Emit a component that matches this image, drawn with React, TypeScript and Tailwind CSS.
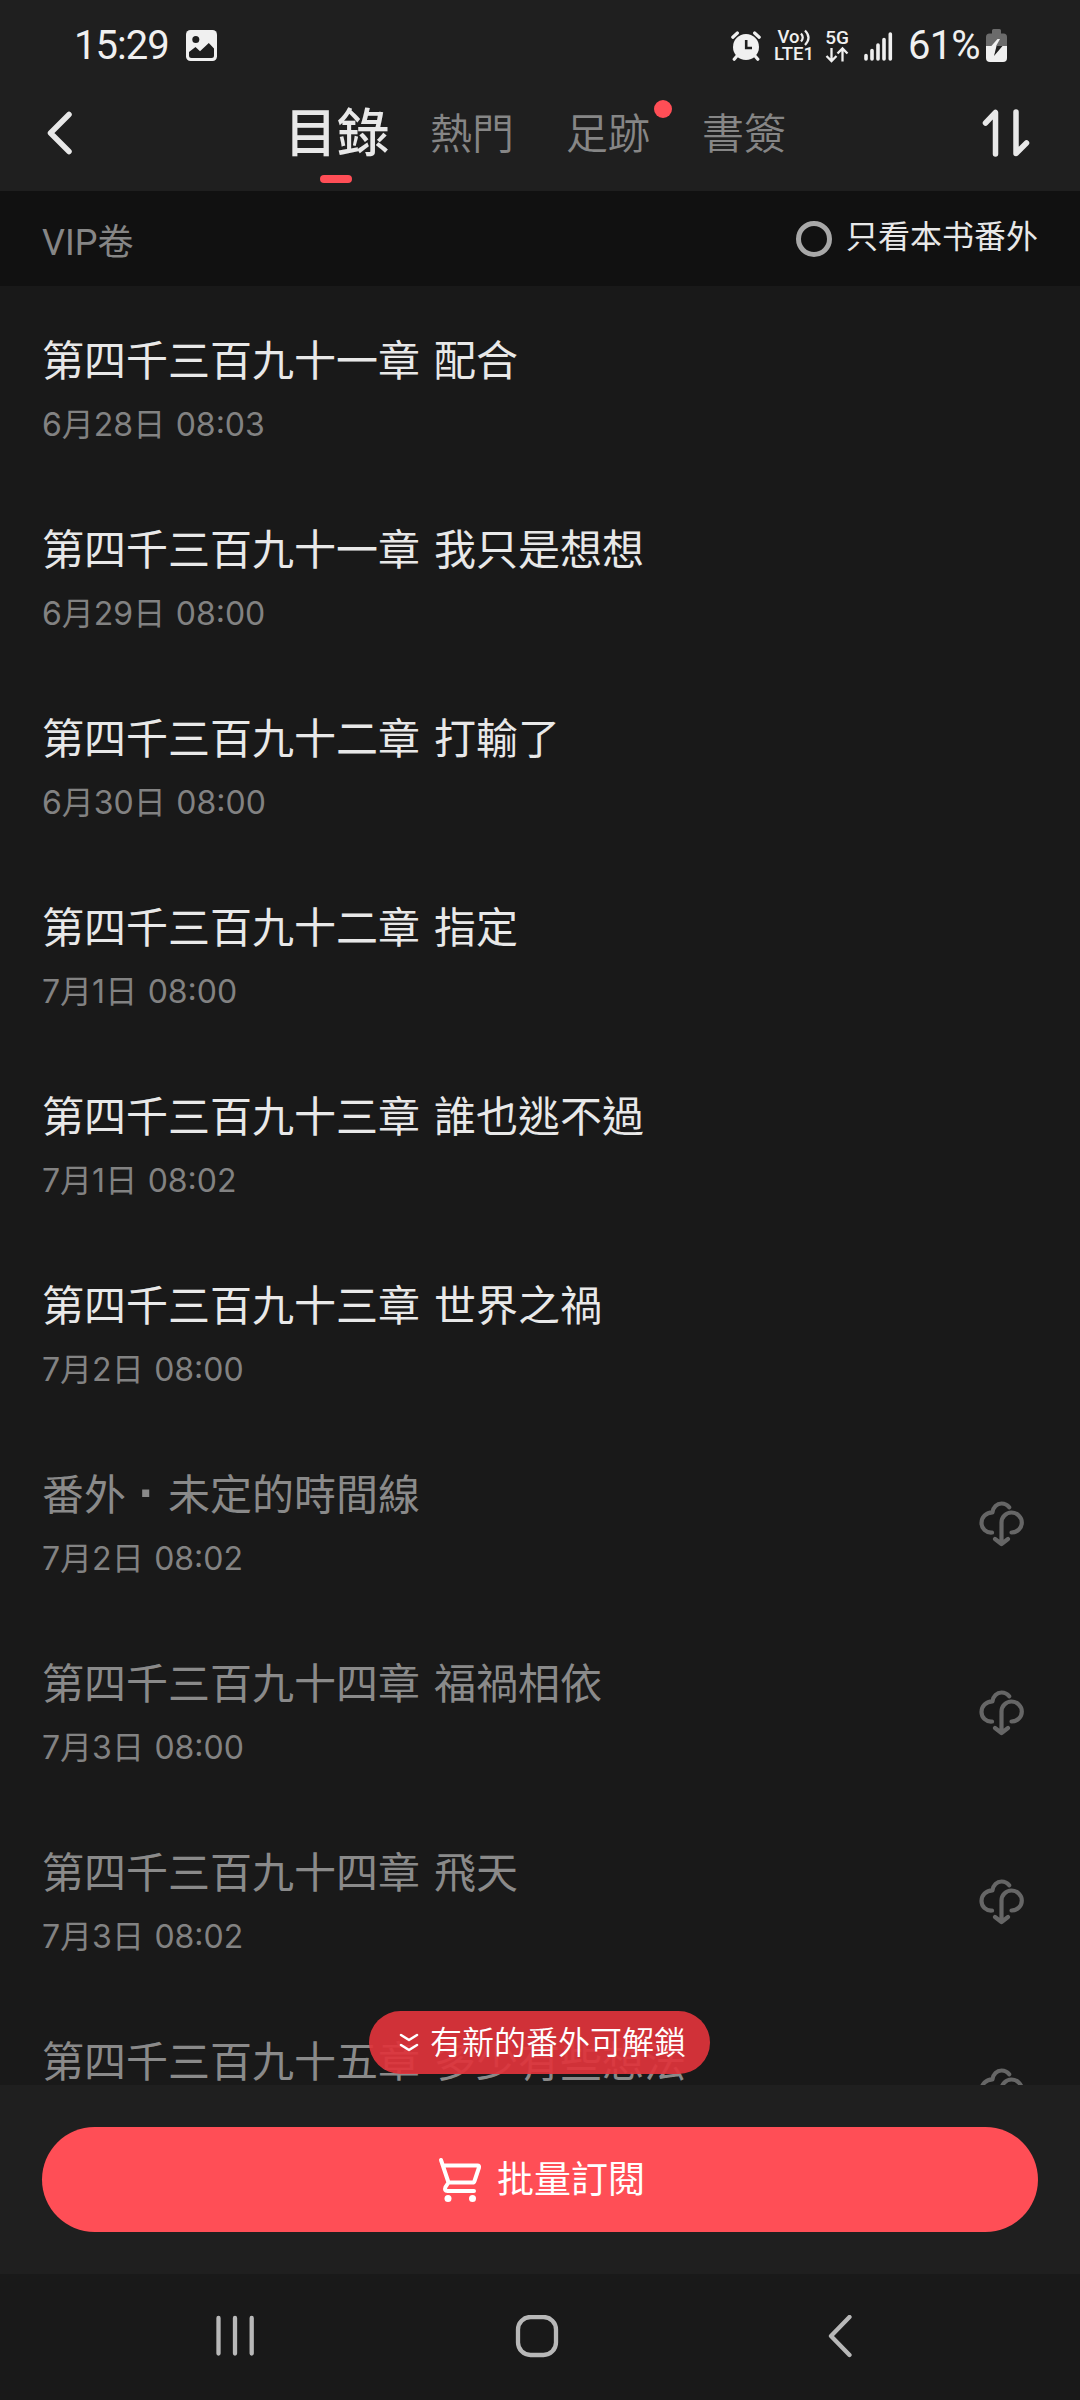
interface Chapter {
  title: string;
  date?: string;
  locked?: boolean;
}

const chapters: Chapter[] = [
  { title: "第四千三百九十一章 配合", date: "6月28日 08:03" },
  { title: "第四千三百九十一章 我只是想想", date: "6月29日 08:00" },
  { title: "第四千三百九十二章 打輸了", date: "6月30日 08:00" },
  { title: "第四千三百九十二章 指定", date: "7月1日 08:00" },
  { title: "第四千三百九十三章 誰也逃不過", date: "7月1日 08:02" },
  { title: "第四千三百九十三章 世界之禍", date: "7月2日 08:00" },
  { title: "番外·未定的時間線", date: "7月2日 08:02", locked: true },
  { title: "第四千三百九十四章 福禍相依", date: "7月3日 08:00", locked: true },
  { title: "第四千三百九十四章 飛天", date: "7月3日 08:02", locked: true },
  { title: "第四千三百九十五章 多少有些想法", locked: true },
];

const tabs = [
  { label: "目錄", active: true },
  { label: "熱門" },
  { label: "足跡", dot: true },
  { label: "書簽" },
];

function AlarmIcon() {
  return (
    <svg width="30" height="30" viewBox="0 0 30 30" fill="none">
      <circle cx="15" cy="16" r="13" fill="#f0f0f0" />
      <path
        d="M1.8 6.2L6.4 2M28.2 6.2L23.6 2M5.5 25.5L3.2 28.2M24.5 25.5L26.8 28.2"
        stroke="#f0f0f0"
        strokeWidth="3.2"
        strokeLinecap="round"
      />
      <path d="M15.2 9V17H21" stroke="#1f1f1f" strokeWidth="2.6" />
    </svg>
  );
}

function StatusBar() {
  return (
    <div className="flex h-[91px] items-center pl-[74px] pr-[73px] font-['Roboto',sans-serif] text-[#f0f0f0]">
      <span className="w-[112px] text-[40px] leading-none tracking-[-1px]">15:29</span>
      <svg width="31" height="31" viewBox="0 0 31 31">
        <rect width="31" height="31" rx="4.5" fill="#f0f0f0" />
        <circle cx="9.8" cy="9.6" r="3.5" fill="#1f1f1f" />
        <path
          d="M3 22L9.5 17L14 21.2L22.8 13L28 18.5V25.5Q28 28 25.5 28H5.5Q3 28 3 25.5Z"
          fill="#1f1f1f"
        />
      </svg>
      <div className="ml-auto flex items-center">
        <AlarmIcon />
        <div className="ml-[12px] flex w-[42px] flex-col items-center text-[18.5px] font-medium leading-[17px]">
          <span className="flex items-center">
            Vo
            <svg width="11" height="17" viewBox="0 0 11 17" fill="none">
              <path
                d="M1 4.5Q4.5 8.5 1 12.5M5 1.5Q12 8.5 5 16"
                stroke="#f0f0f0"
                strokeWidth="2.2"
              />
            </svg>
          </span>
          <span>LTE1</span>
        </div>
        <div className="ml-[9px] flex w-[26px] flex-col items-center text-[19px] font-medium leading-[17px]">
          <span>5G</span>
          <svg width="24" height="17" viewBox="0 0 24 17" fill="none">
            <path
              d="M6.5 2V14.5M1.5 10L6.5 15L11.5 10M17.5 15.5V3M12.5 7.5L17.5 2.5L22.5 7.5"
              stroke="#f0f0f0"
              strokeWidth="2.3"
            />
          </svg>
        </div>
        <svg
          className="ml-[14px]"
          width="29"
          height="30"
          viewBox="0 0 29 30"
          stroke="#f0f0f0"
          strokeWidth="3.6"
          strokeLinecap="round"
        >
          <path d="M2 24.5V28M8 19.5V28M14 14V28M20 8.5V28M26.3 3V28" />
        </svg>
        <span className="ml-[15px] w-[78px] text-[40px] leading-none tracking-[-0.8px]">61%</span>
        <svg width="21" height="33" viewBox="0 0 21 33">
          <path
            d="M6 1.5Q6 0 7.5 0H13.5Q15 0 15 1.5V4.5H17.5Q21 4.5 21 8V18H0V8Q0 4.5 3.5 4.5H6Z"
            fill="#6b6b6b"
          />
          <path d="M0 17H21V29Q21 33 17 33H4Q0 33 0 29Z" fill="#f0f0f0" />
          <path d="M11.5 10L4.5 18H9.5L14 10Z" fill="#f0f0f0" />
          <path d="M4.5 17H10.5L8 27L16.5 17Z" fill="#1f1f1f" />
        </svg>
      </div>
    </div>
  );
}

function TabBar() {
  return (
    <div className="flex h-[100px] items-start pl-[45px] pr-[49px]">
      <svg className="mt-[20px]" width="28" height="44" viewBox="0 0 28 44" fill="none">
        <path
          d="M24 3.5L5.5 22L24 40.5"
          stroke="#e8e8e8"
          strokeWidth="5.5"
          strokeLinecap="round"
          strokeLinejoin="round"
        />
      </svg>
      <div className="ml-[195px] flex">
        {tabs.map((tab) => (
          <div key={tab.label} className="relative flex w-[136px] flex-col items-center">
            <span
              className={
                tab.active
                  ? "h-[84px] pl-[2px] text-[52.5px] font-medium leading-[77px] text-[#e8e8e8]"
                  : "h-[84px] text-[42px] font-[350] leading-[79px] text-[#868686]"
              }
            >
              {tab.label}
            </span>
            {tab.active && <div className="h-[8px] w-[32px] rounded-full bg-[#ff4e56]" />}
            {tab.dot && (
              <div className="absolute left-[114px] top-[9px] h-[18px] w-[18px] rounded-full bg-[#ff4e56]" />
            )}
          </div>
        ))}
      </div>
      <svg className="ml-auto mt-[17px]" width="50" height="50" viewBox="0 0 50 50" fill="none">
        <path
          d="M4.5 15L14.5 4.5V46M35 4V45.5L45.5 35"
          stroke="#e8e8e8"
          strokeWidth="5.5"
          strokeLinecap="round"
          strokeLinejoin="round"
        />
      </svg>
    </div>
  );
}

function CloudDownload() {
  return (
    <svg width="46" height="46" viewBox="0 0 46 46" fill="none">
      <path
        d="M13 31.5C7 32 2.5 27.5 2.5 22C2.5 16 7 11.5 13.5 11.3C14 6 18 2.5 22.5 2.5C26 2.5 28.5 4 30.2 6.3M32.5 31.5C38.5 31.5 42.8 27 42.8 21.5C42.8 16 38 11.5 32.5 11.5C27 11.5 22.5 16 22.5 21.5V42.5M16 38L22.5 43L29 38"
        stroke="#666666"
        strokeWidth="4.2"
        strokeLinecap="round"
        strokeLinejoin="round"
      />
    </svg>
  );
}

function ChapterTitle({ title }: { title: string }) {
  const [before, after] = title.split("·");
  if (!after) return <>{title}</>;
  return (
    <>
      {before}
      <span className="inline-block w-[42px] text-center font-['Liberation_Sans',sans-serif] text-[50px] font-bold leading-none">
        ·
      </span>
      {after}
    </>
  );
}

function ChapterRow(props: Chapter) {
  return (
    <div className="flex h-[189px] shrink-0 items-center justify-between pl-[42px] pr-[55px]">
      <div className="whitespace-nowrap">
        <p
          className={
            props.locked
              ? "h-[64px] text-[42px] leading-[64px] text-[#8a8a8a] [word-spacing:4.5px]"
              : "h-[64px] text-[42px] leading-[64px] text-[#e8e8e8] [word-spacing:4.5px]"
          }
        >
          <ChapterTitle title={props.title} />
        </p>
        <p className="h-[64px] font-['Inter','Noto_Sans_CJK_TC',sans-serif] text-[32px] leading-[70px] text-[#828282] [word-spacing:1.5px]">
          {props.date}
        </p>
      </div>
      {props.locked && <CloudDownload />}
    </div>
  );
}

function UnlockToast() {
  return (
    <div className="absolute bottom-[11px] left-[369px] flex h-[63px] w-[341px] items-center rounded-full bg-[#df343b]/93 pl-[30px] text-white">
      <svg width="20" height="20" viewBox="0 0 20 20" fill="none">
        <path
          d="M2 2L10 7L18 2M2 12L10 17L18 12"
          stroke="currentColor"
          strokeWidth="2.6"
          strokeLinecap="round"
          strokeLinejoin="round"
        />
      </svg>
      <span className="ml-[11px] whitespace-nowrap pb-[5px] text-[32px] font-[350] leading-none">
        有新的番外可解鎖
      </span>
    </div>
  );
}

function SubscribeBar() {
  return (
    <div className="flex h-[189px] items-center bg-[#1f1f1f] px-[42px]">
      <button className="flex h-[105px] w-full items-center justify-center gap-[15px] rounded-full bg-[#ff4e56] pl-[3px] text-white">
        <svg width="44" height="46" viewBox="0 0 44 46" fill="none">
          <path
            d="M3 3L10.5 25.5H34.5Q36 25.5 36.5 24L41 10.5Q41.5 8.5 39.5 8.5H5M10.5 25.5L7.5 30Q6 34 9.5 34H36"
            stroke="currentColor"
            strokeWidth="4"
            strokeLinecap="round"
            strokeLinejoin="round"
          />
          <circle cx="10" cy="41.5" r="3.5" fill="currentColor" />
          <circle cx="34.5" cy="41.5" r="3.5" fill="currentColor" />
        </svg>
        <span className="pb-[5px] text-[37px] leading-none">批量訂閱</span>
      </button>
    </div>
  );
}

function NavBar() {
  return (
    <div className="flex h-[126px] items-center bg-[#191919] pl-[214px]">
      <svg width="42" height="44" viewBox="0 0 42 44" stroke="#b8b8b8" strokeWidth="4.3" strokeLinecap="round">
        <path d="M4.5 3V38.5M21 3V38.5M37.7 3V38.5" />
      </svg>
      <svg className="ml-[259px]" width="44" height="44" viewBox="0 0 44 44" fill="none">
        <rect x="3" y="2" width="38" height="38" rx="12.5" stroke="#b8b8b8" strokeWidth="4.3" />
      </svg>
      <svg className="ml-[267px]" width="27" height="44" viewBox="0 0 27 44" fill="none">
        <path
          d="M23.5 2L5 21L23.5 40"
          stroke="#b8b8b8"
          strokeWidth="4.3"
          strokeLinecap="round"
          strokeLinejoin="round"
        />
      </svg>
    </div>
  );
}

function App() {
  return (
    <div className="flex h-[2400px] w-[1080px] flex-col overflow-hidden bg-[#191919] font-['Noto_Sans_CJK_TC',sans-serif]">
      <header className="bg-[#1f1f1f]">
        <StatusBar />
        <TabBar />
      </header>
      <div className="flex h-[95px] items-center justify-between bg-[#111111] px-[42px]">
        <span className="pt-[8px] font-['Roboto','Noto_Sans_CJK_TC',sans-serif] text-[36px] leading-none text-[#868686]">
          VIP卷
        </span>
        <div className="flex items-center gap-[14px]">
          <div className="h-[36px] w-[36px] rounded-full border-[5.5px] border-[#a8a8a8]" />
          <span className="pb-[10px] text-[32px] leading-none text-[#e8e8e8]">只看本书番外</span>
        </div>
      </div>
      <main className="relative flex min-h-0 flex-1 flex-col overflow-hidden pt-[9px]">
        {chapters.map((chapter) => (
          <ChapterRow key={chapter.title} {...chapter} />
        ))}
        <UnlockToast />
      </main>
      <SubscribeBar />
      <NavBar />
    </div>
  );
}

export default App;
